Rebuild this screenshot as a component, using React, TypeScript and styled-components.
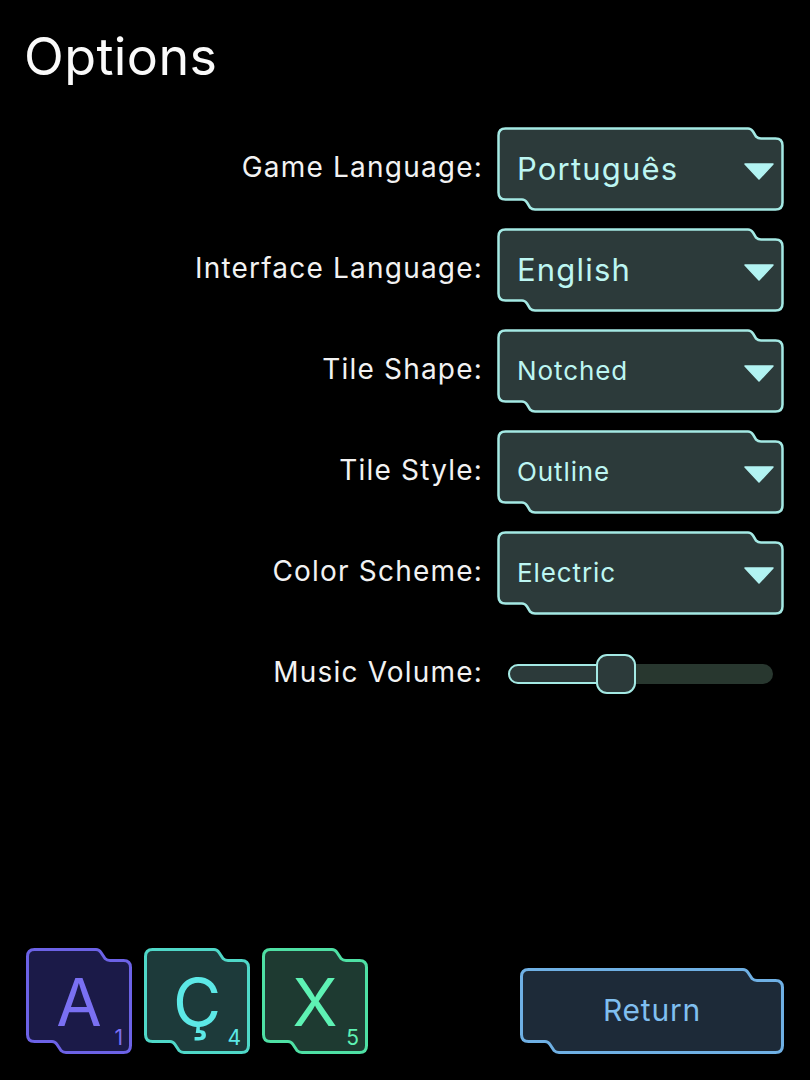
import React from 'react'
import styled, {createGlobalStyle} from 'styled-components'

const GlobalStyle = createGlobalStyle`
  html, body {
    margin: 0;
    padding: 0;
    background: #000;
  }
  body {
    font-family: Inter, "Noto Sans", "Liberation Sans", sans-serif;
    color: #f2f2f2;
  }
`

// outline of the notched "folder" shape used by selects, tiles and buttons
const notchPath = (w: number, h: number, top: number, bottom: number, drop: number, r = 7, s = 1.5) => {
    const x0 = s, y0 = s, x1 = w - s, y1 = h - s
    return [
        `M ${x0 + r} ${y0}`,
        `L ${top} ${y0}`,
        `Q ${top + 3} ${y0} ${top + 5} ${y0 + 3}`,
        `L ${top + drop - 2} ${y0 + drop - 2}`,
        `Q ${top + drop} ${y0 + drop} ${top + drop + 3} ${y0 + drop}`,
        `L ${x1 - r} ${y0 + drop}`,
        `Q ${x1} ${y0 + drop} ${x1} ${y0 + drop + r}`,
        `L ${x1} ${y1 - r}`,
        `Q ${x1} ${y1} ${x1 - r} ${y1}`,
        `L ${bottom + drop + 3} ${y1}`,
        `Q ${bottom + drop} ${y1} ${bottom + drop - 2} ${y1 - 2}`,
        `L ${bottom + 5} ${y1 - drop + 3}`,
        `Q ${bottom + 3} ${y1 - drop} ${bottom} ${y1 - drop}`,
        `L ${x0 + r} ${y1 - drop}`,
        `Q ${x0} ${y1 - drop} ${x0} ${y1 - drop - r}`,
        `L ${x0} ${y0 + r}`,
        `Q ${x0} ${y0} ${x0 + r} ${y0}`,
        'Z',
    ].join(' ')
}

type ShapeProps = {
    w: number
    h: number
    top: number
    bottom: number
    drop: number
    fill: string
    stroke: string
    strokeWidth?: number
}

const NotchShape = ({w, h, top, bottom, drop, fill, stroke, strokeWidth = 2.5}: ShapeProps) => (
    <ShapeSvg width={w} height={h} viewBox={`0 0 ${w} ${h}`}>
        <path d={notchPath(w, h, top, bottom, drop)} fill={fill} stroke={stroke}
              strokeWidth={strokeWidth} strokeLinejoin="round"/>
    </ShapeSvg>
)

const Select = ({value, small}: { value: string, small?: boolean }) => (
    <SelectBox>
        <NotchShape w={287} h={84} top={251} bottom={25} drop={10} fill="#2c3a3a" stroke="#a4e9e4"/>
        <SelectValue $small={small}>{value}</SelectValue>
        <Caret width="30" height="17" viewBox="0 0 30 17">
            <path d="M1 1 L29 1 L15 16 Z" fill="#b2f3f2" stroke="#b2f3f2" strokeWidth="1.5" strokeLinejoin="round"/>
        </Caret>
    </SelectBox>
)

const tiles = [
    {letter: 'A', score: '1', fill: '#1b1a48', stroke: '#6c62e6', color: '#7a70f2'},
    {letter: 'Ç', score: '4', fill: '#1d3a3a', stroke: '#4fd8c8', color: '#5ce8e6'},
    {letter: 'X', score: '5', fill: '#1e3a31', stroke: '#4ee0a4', color: '#5ef2b4'},
]

export default function App() {
    const volume = 0.39

    return (
        <Page>
            <GlobalStyle/>
            <Title>Options</Title>
            <Form>
                <Label>Game Language:</Label>
                <Select value="Português"/>
                <Label>Interface Language:</Label>
                <Select value="English"/>
                <Label>Tile Shape:</Label>
                <Select value="Notched" small/>
                <Label>Tile Style:</Label>
                <Select value="Outline" small/>
                <Label>Color Scheme:</Label>
                <Select value="Electric" small/>
                <Label>Music Volume:</Label>
                <SliderCell>
                    <Track>
                        <Fill style={{width: `calc(${volume} * (100% - 40px) + 22px)`}}/>
                        <Thumb style={{left: `calc(${volume} * (100% - 40px))`}}/>
                    </Track>
                </SliderCell>
            </Form>
            <Footer>
                <Tiles>
                    {tiles.map(tile => (
                        <Tile key={tile.letter}>
                            <NotchShape w={106} h={106} top={70} bottom={26} drop={11}
                                        fill={tile.fill} stroke={tile.stroke} strokeWidth={3}/>
                            <TileLetter $color={tile.color}>{tile.letter}</TileLetter>
                            <TileScore $color={tile.color}>{tile.score}</TileScore>
                        </Tile>
                    ))}
                </Tiles>
                <ReturnButton>
                    <NotchShape w={264} h={86} top={223} bottom={25} drop={11}
                                fill="#1d2a38" stroke="#6fb0e4" strokeWidth={3}/>
                    <ReturnLabel>Return</ReturnLabel>
                </ReturnButton>
            </Footer>
        </Page>
    )
}

const Page = styled.div`
  min-height: 100vh;
  box-sizing: border-box;
  display: flex;
  flex-direction: column;
  padding: 26px 26px 26px 24px;
  background: #000;
`

const Title = styled.h1`
  margin: 0;
  font-size: 52px;
  font-weight: 400;
  line-height: 60px;
  padding-top: 1px;
  color: #fafafa;
  letter-spacing: 0.4px;
`

const Form = styled.div`
  margin-top: 40px;
  display: grid;
  grid-template-columns: 1fr 287px;
  column-gap: 14px;
  row-gap: 17px;
  align-items: center;
`

const Label = styled.div`
  text-align: right;
  font-size: 28px;
  letter-spacing: 1.2px;
  color: #f2f2f2;
  margin-top: -4px;
`

const ShapeSvg = styled.svg`
  position: absolute;
  inset: 0;
  display: block;
`

const SelectBox = styled.div`
  position: relative;
  width: 287px;
  height: 84px;
  display: flex;
  align-items: center;
  padding: 0 10px 0 20px;
  box-sizing: border-box;
  cursor: pointer;
`

const SelectValue = styled.span<{ $small?: boolean }>`
  position: relative;
  flex: 1;
  font-size: ${p => p.$small ? '26px' : '31px'};
  letter-spacing: ${p => p.$small ? '0.9px' : '1.2px'};
  color: #bdf6f2;
  margin-top: -1px;
`

const Caret = styled.svg`
  position: relative;
  margin-top: 4px;
`

const SliderCell = styled.div`
  height: 84px;
  display: flex;
  align-items: center;
  padding: 0 11px;
`

const Track = styled.div`
  position: relative;
  flex: 1;
  height: 20px;
  border-radius: 10px;
  background: #28372f;
`

const Fill = styled.div`
  position: absolute;
  left: 0;
  top: 0;
  bottom: 0;
  box-sizing: border-box;
  border: 2.5px solid #a4e9e4;
  border-radius: 10px;
  background: #2c3a3a;
`

const Thumb = styled.div`
  position: absolute;
  top: 50%;
  width: 40px;
  height: 40px;
  margin-top: -20px;
  box-sizing: border-box;
  border: 2.5px solid #a4e9e4;
  border-radius: 11px;
  background: #2c3a3a;
`

const Footer = styled.div`
  margin-top: auto;
  display: flex;
  align-items: flex-end;
  justify-content: space-between;
  padding-left: 2px;
`

const Tiles = styled.div`
  display: flex;
  gap: 12px;
`

const Tile = styled.div`
  position: relative;
  width: 106px;
  height: 106px;
  display: flex;
  align-items: center;
  justify-content: center;
`

const TileLetter = styled.span<{ $color: string }>`
  position: relative;
  font-size: 66px;
  color: ${p => p.$color};
  margin-top: 2px;
`

const TileScore = styled.span<{ $color: string }>`
  position: absolute;
  right: 9px;
  bottom: 4px;
  font-size: 21px;
  color: ${p => p.$color};
`

const ReturnButton = styled.div`
  position: relative;
  width: 264px;
  height: 86px;
  display: flex;
  align-items: center;
  justify-content: center;
  cursor: pointer;
`

const ReturnLabel = styled.span`
  position: relative;
  font-size: 30px;
  letter-spacing: 0.8px;
  color: #80bff0;
  margin-top: -2px;
`
